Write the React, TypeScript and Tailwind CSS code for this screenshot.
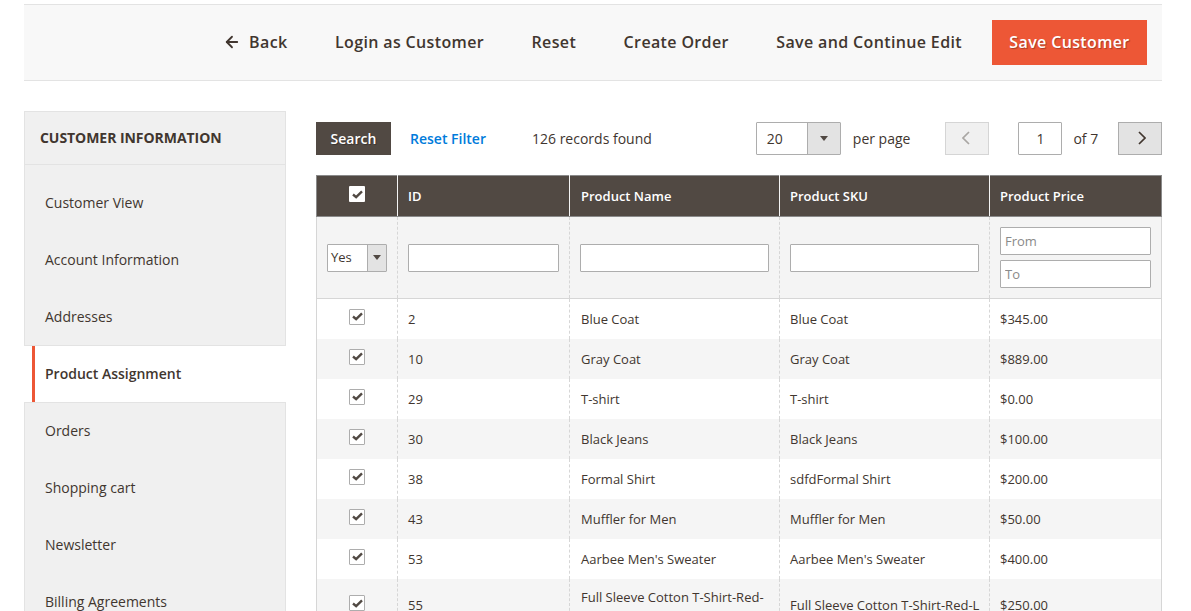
import { ArrowLeft } from "lucide-react";

const rows = [
  { id: "2", name: "Blue Coat", sku: "Blue Coat", price: "$345.00" },
  { id: "10", name: "Gray Coat", sku: "Gray Coat", price: "$889.00" },
  { id: "29", name: "T-shirt", sku: "T-shirt", price: "$0.00" },
  { id: "30", name: "Black Jeans", sku: "Black Jeans", price: "$100.00" },
  { id: "38", name: "Formal Shirt", sku: "sdfdFormal Shirt", price: "$200.00" },
  { id: "43", name: "Muffler for Men", sku: "Muffler for Men", price: "$50.00" },
  { id: "53", name: "Aarbee Men's Sweater", sku: "Aarbee Men's Sweater", price: "$400.00" },
];

const actions = ["Login as Customer", "Reset", "Create Order", "Save and Continue Edit"];
const topNav = ["Customer View", "Account Information", "Addresses"];
const bottomNav = ["Orders", "Shopping cart", "Newsletter", "Billing Agreements"];

function Checkbox({ dark }: { dark?: boolean }) {
  return (
    <span
      className={`inline-flex h-4 w-4 items-center justify-center rounded-[1px] bg-white ${
        dark ? "" : "border border-[#adadad]"
      }`}
    >
      <svg viewBox="0 0 12 10" className="h-[9px] w-[11px]" fill="none" stroke="#514943" strokeWidth="2.6">
        <path d="M1 5 L4.5 8 L11 1.5" />
      </svg>
    </span>
  );
}

function SelectArrow({ width }: { width: string }) {
  return (
    <span className={`flex h-full items-center justify-center border-l border-[#adadad] bg-[#e3e3e3] ${width}`}>
      <span className="h-0 w-0 border-x-[4px] border-t-[5px] border-x-transparent border-t-[#514943]" />
    </span>
  );
}

function Chevron({ left }: { left?: boolean }) {
  return (
    <svg
      viewBox="0 0 8 14"
      className={`-mt-[2px] h-[14px] w-2 ${left ? "mr-[2px]" : "ml-[3px]"}`}
      fill="none"
      stroke="currentColor"
      strokeWidth="1.7"
    >
      <path d={left ? "M7 1 L1 7 L7 13" : "M1 1 L7 7 L1 13"} />
    </svg>
  );
}

const thClass =
  "h-[41px] border border-[#8a8a8a] border-x-[#f4f4f4] bg-[#514943] px-[10px] pt-[2px] text-left align-middle text-[13px] font-semibold text-white";
const cellClass = "border-x border-dashed border-x-[#d6d6d6] px-[10px] align-middle";
const textCell = `${cellClass} pt-[2px]`;
const textButton = "pb-[2px]";

export default function App() {
  return (
    <div className="h-[611px] overflow-hidden bg-white pl-6 pr-[29px] pt-1 font-['Open_Sans',sans-serif] text-[14px] text-[#41362f]">
      <div className="flex h-[77px] items-center justify-end gap-[47.5px] border-y border-[#e3e3e3] bg-[#f8f8f8] pr-[15px] text-[16px] font-semibold tracking-[0.36px]">
        <button className={`flex items-center gap-[8px] ${textButton}`}>
          <ArrowLeft className="h-[18px] w-[18px]" strokeWidth={2.4} />
          Back
        </button>
        {actions.map((a) => (
          <button key={a} className={textButton}>
            {a}
          </button>
        ))}
        <button className="-ml-[17.5px] h-[45px] w-[155px] bg-[#ed5736] pb-[2px] text-white [text-shadow:1px_1px_1px_rgba(0,0,0,0.3)]">
          Save Customer
        </button>
      </div>

      <div className="mt-[30px] flex items-start gap-[30px]">
        <aside className="w-[262px] shrink-0">
          <div className="border border-[#e3e3e3] bg-[#f0f0f0]">
            <div className="flex h-[53px] items-center border-b border-[#e3e3e3] pb-[2px] pl-[15px] font-bold uppercase tracking-[-0.05px]">
              Customer Information
            </div>
            <div className="pt-[9px]">
              {topNav.map((n) => (
                <div key={n} className="flex h-[57px] items-center pl-5">
                  {n}
                </div>
              ))}
            </div>
          </div>
          <div className="ml-2 flex h-[56px] items-center border-l-[3px] border-[#ed5736] bg-white pb-[2px] pl-[10px] font-semibold">
            Product Assignment
          </div>
          <div className="border border-[#e3e3e3] bg-[#f0f0f0]">
            {bottomNav.map((n) => (
              <div key={n} className="flex h-[57px] items-center pb-[2px] pl-5">
                {n}
              </div>
            ))}
          </div>
        </aside>

        <main className="min-w-0 flex-1 pt-[11px]">
          <div className="flex h-[33px] items-center">
            <button className="h-[33px] w-[75px] bg-[#514943] font-semibold text-white [text-shadow:1px_1px_1px_rgba(0,0,0,0.3)]">
              Search
            </button>
            <a className="ml-[19px] font-semibold text-[#007bdb]">Reset Filter</a>
            <span className="ml-[46px]">126 records found</span>
            <div className="ml-[104px] flex h-[33px] w-[85px] items-center rounded-[1px] border border-[#adadad] bg-white">
              <span className="flex-1 pl-[10px]">20</span>
              <SelectArrow width="w-[33px]" />
            </div>
            <span className="ml-3">per page</span>
            <button className="ml-[35px] flex h-[33px] w-[44px] items-center justify-center border border-[#d5d5d5] bg-[#f0f0f0] text-[#a9a6a3]">
              <Chevron left />
            </button>
            <div className="ml-[29px] flex h-[33px] w-[44px] items-center justify-center rounded-[1px] border border-[#adadad] bg-white">
              1
            </div>
            <span className="ml-[11px]">of 7</span>
            <button className="ml-auto flex h-[33px] w-[44px] items-center justify-center border border-[#adadad] bg-[#e3e3e3]">
              <Chevron />
            </button>
          </div>

          <table className="mt-5 w-[845px] table-fixed border-collapse border border-[#d6d6d6] text-[13px]">
            <colgroup>
              <col className="w-[81px]" />
              <col className="w-[172px]" />
              <col className="w-[210px]" />
              <col className="w-[210px]" />
              <col className="w-[172px]" />
            </colgroup>
            <thead>
              <tr>
                <th className={`${thClass} border-l-[#8a8a8a] text-center`}>
                  <div className="-mt-[6px] flex justify-center">
                    <Checkbox dark />
                  </div>
                </th>
                <th className={thClass}>ID</th>
                <th className={`${thClass} pl-[11px]`}>Product Name</th>
                <th className={thClass}>Product SKU</th>
                <th className={`${thClass} border-r-[#8a8a8a]`}>Product Price</th>
              </tr>
              <tr className="h-[82px] border-b border-[#d6d6d6] bg-[#f4f4f4]">
                <td className={cellClass}>
                  <div className="flex h-7 w-[60px] items-center rounded-[1px] border border-[#adadad] bg-white">
                    <span className="flex-1 pl-[3px] text-[13px]">Yes</span>
                    <SelectArrow width="w-[19px]" />
                  </div>
                </td>
                {[0, 1, 2].map((i) => (
                  <td key={i} className={cellClass}>
                    <input readOnly className="block h-7 w-full rounded-[1px] border border-[#adadad] bg-white" />
                  </td>
                ))}
                <td className={cellClass}>
                  <input
                    readOnly
                    placeholder="From"
                    className="block h-7 w-full rounded-[1px] border border-[#adadad] bg-white px-[4px] placeholder:text-[#8a8a8a]"
                  />
                  <input
                    readOnly
                    placeholder="To"
                    className="mt-[5px] block h-7 w-full rounded-[1px] border border-[#adadad] bg-white px-[4px] placeholder:text-[#8a8a8a]"
                  />
                </td>
              </tr>
            </thead>
            <tbody>
              {rows.map((r, i) => (
                <tr key={r.id} className={`h-10 ${i % 2 ? "bg-[#f5f5f5]" : "bg-white"}`}>
                  <td className={`${cellClass} text-center`}>
                    <div className="-mt-[4px] flex justify-center">
                      <Checkbox />
                    </div>
                  </td>
                  <td className={textCell}>{r.id}</td>
                  <td className={`${textCell} pl-[11px]`}>{r.name}</td>
                  <td className={textCell}>{r.sku}</td>
                  <td className={textCell}>{r.price}</td>
                </tr>
              ))}
              <tr className="h-[52px] bg-[#f5f5f5]">
                <td className={`${cellClass} text-center`}>
                  <div className="-mt-[2px] flex justify-center">
                    <Checkbox />
                  </div>
                </td>
                <td className={textCell}>55</td>
                <td className={`${cellClass} pl-[11px] pt-[6px]`}>
                  Full Sleeve Cotton T-Shirt-Red-
                  <br />L
                </td>
                <td className={`${textCell} whitespace-nowrap`}>Full Sleeve Cotton T-Shirt-Red-L</td>
                <td className={textCell}>$250.00</td>
              </tr>
            </tbody>
          </table>
        </main>
      </div>
    </div>
  );
}
